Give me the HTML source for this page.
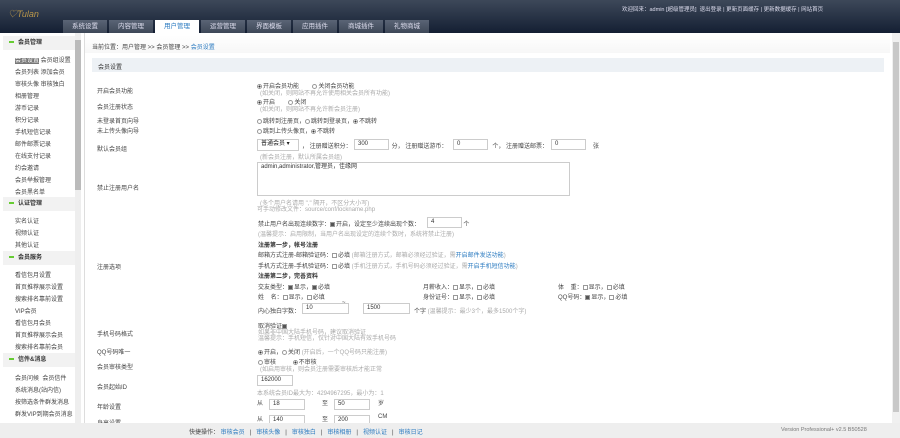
<!DOCTYPE html>
<html><head><meta charset="utf-8"><style>
*{margin:0;padding:0;box-sizing:border-box}
body{width:900px;height:438px;overflow:hidden;position:relative;background:#fff;font-family:"Liberation Sans","Noto Sans CJK SC",sans-serif;font-size:6px;color:#444}
.a{position:absolute;white-space:nowrap}
.h{color:#aaa}
.b{color:#333;font-weight:bold}
.lk{color:#2a7ac0}
#hd{position:absolute;left:0;top:0;width:900px;height:33px;background:linear-gradient(#3d4859,#141f33)}
.tab{position:absolute;top:20px;height:13px;width:44px;background:linear-gradient(#5a6475,#3e4858);color:#dde;text-align:center;line-height:13px;font-size:6.5px}
.tab.on{background:#fff;color:#2a7ac0}
#sb{position:absolute;left:0;top:33px;width:75px;height:390px;background:#fff}
.sh{position:absolute;left:3px;width:72px;height:14px;background:#f2f2f2;line-height:14px;padding-left:6px;font-weight:bold;color:#333}
.sh:before{content:"";display:inline-block;width:5px;height:2px;background:#6c3;margin-right:4px;vertical-align:middle}
.si{position:absolute;left:15px}
.inp{position:absolute;height:11px;border:1px solid #ccc;background:#fff;padding-left:3px;line-height:9px;color:#333}
.r{display:inline-block;width:5px;height:5px;border:1px solid #999;border-radius:50%;vertical-align:middle;margin-right:1px}
.r.c{background:radial-gradient(#333 40%,#fff 45%)}
.c2{display:inline-block;width:5px;height:5px;border:1px solid #999;vertical-align:middle;margin-right:1px}
.c2.c{background:#555}
</style></head><body>
<div id="hd">
<div class="a" style="left:8px;top:7px;color:#b8964a;font-style:italic;font-size:9px">♡Tulan</div>
<div class="a" style="left:622px;top:5px;color:#dde;font-size:5.5px">欢迎回来：admin [超级管理员] &nbsp;退出登录 | 更新页面缓存 | 更新数据缓存 | 网站首页</div>
<div class="tab" style="left:63px">系统设置</div>
<div class="tab" style="left:109px">内容管理</div>
<div class="tab on" style="left:155px">用户管理</div>
<div class="tab" style="left:201px">运营管理</div>
<div class="tab" style="left:247px">界面模板</div>
<div class="tab" style="left:293px">应用插件</div>
<div class="tab" style="left:339px">商城插件</div>
<div class="tab" style="left:385px">礼物商城</div>
</div>
<div id="sb">
<div class="sh" style="top:3px">会员管理</div>
<div class="si" style="top:22px"><span style="background:#777;color:#fff">会员设置</span> 会员组设置</div>
<div class="si" style="top:34px">会员列表 添加会员</div>
<div class="si" style="top:46px">审核头像 审核独白</div>
<div class="si" style="top:58px">相册管理</div>
<div class="si" style="top:70px">游币记录</div>
<div class="si" style="top:82px">积分记录</div>
<div class="si" style="top:94px">手机短信记录</div>
<div class="si" style="top:106px">邮件邮票记录</div>
<div class="si" style="top:118px">在线支付记录</div>
<div class="si" style="top:130px">约会邀请</div>
<div class="si" style="top:142px">会员举报管理</div>
<div class="si" style="top:154px">会员黑名单</div>
<div class="sh" style="top:164px">认证管理</div>
<div class="si" style="top:183px">实名认证</div>
<div class="si" style="top:195px">视频认证</div>
<div class="si" style="top:207px">其他认证</div>
<div class="sh" style="top:218px">会员服务</div>
<div class="si" style="top:237px">看信包月设置</div>
<div class="si" style="top:249px">首页推荐展示设置</div>
<div class="si" style="top:261px">搜索排名靠前设置</div>
<div class="si" style="top:273px">VIP会员</div>
<div class="si" style="top:285px">看信包月会员</div>
<div class="si" style="top:297px">首页推荐展示会员</div>
<div class="si" style="top:309px">搜索排名靠前会员</div>
<div class="sh" style="top:320px">信件&amp;消息</div>
<div class="si" style="top:340px">会员问候 &nbsp;会员信件</div>
<div class="si" style="top:352px">系统消息(站内信)</div>
<div class="si" style="top:364px">按筛选条件群发消息</div>
<div class="si" style="top:376px">群发VIP到期会员消息</div>
</div>
<div class="a" style="left:75px;top:33px;width:6px;height:390px;background:#eee"></div>
<div class="a" style="left:75px;top:40px;width:6px;height:150px;background:#bbb"></div>
<div class="a" style="left:84px;top:33px;width:1px;height:390px;background:#ddd"></div>
<div class="a" style="left:892px;top:33px;width:8px;height:390px;background:#f0f0f0"></div>
<div class="a" style="left:893px;top:42px;width:6px;height:370px;background:#c8c8c8"></div>
<div class="a" style="left:85px;top:35px;width:805px;height:18px;background:linear-gradient(#fff,#f7f7f7)"></div>
<div class="a" style="left:92px;top:42px">当前位置：用户管理 &gt;&gt; 会员管理 &gt;&gt; <span class="lk">会员设置</span></div>
<div class="a" style="left:92px;top:58px;width:792px;height:14px;background:#edf1f5"></div>
<div class="a" style="left:98px;top:62px;color:#333">会员设置</div>

<div class="a" style="left:97px;top:86px">开启会员功能</div>
<div class="a" style="left:257px;top:81px"><span class="r c"></span>开启会员功能 &nbsp;&nbsp;&nbsp;&nbsp;&nbsp;&nbsp;&nbsp;<span class="r"></span>关闭会员功能</div>
<div class="a h" style="left:260px;top:88px">(如关闭，则网站不再允许使用相关会员所有功能)</div>
<div class="a" style="left:97px;top:102px">会员注册状态</div>
<div class="a" style="left:257px;top:97px"><span class="r c"></span>开启 &nbsp;&nbsp;&nbsp;&nbsp;&nbsp;&nbsp;&nbsp;<span class="r"></span>关闭</div>
<div class="a h" style="left:260px;top:104px">(如关闭，则网站不再允许新会员注册)</div>
<div class="a" style="left:97px;top:116px">未登录首页向导</div>
<div class="a" style="left:257px;top:116px"><span class="r"></span>跳转到注册页，<span class="r"></span>跳转到登录页，<span class="r c"></span>不跳转</div>
<div class="a" style="left:97px;top:126px">未上传头像向导</div>
<div class="a" style="left:257px;top:126px"><span class="r"></span>跳到上传头像页，<span class="r c"></span>不跳转</div>
<div class="a" style="left:97px;top:144px">默认会员组</div>
<div class="inp" style="left:257px;top:139px;width:42px;height:12px;color:#222">普通会员 ▾</div>
<div class="a" style="left:302px;top:141px">， 注册赠送积分： &nbsp;&nbsp;&nbsp;&nbsp;&nbsp;&nbsp;&nbsp;&nbsp;&nbsp;&nbsp;&nbsp;&nbsp;&nbsp;&nbsp;&nbsp;&nbsp;&nbsp;&nbsp;&nbsp;&nbsp;&nbsp;&nbsp; 分， 注册赠送游币：&nbsp;&nbsp;&nbsp;&nbsp;&nbsp;&nbsp;&nbsp;&nbsp;&nbsp;&nbsp;&nbsp;&nbsp;&nbsp;&nbsp;&nbsp;&nbsp;&nbsp;&nbsp;&nbsp;&nbsp;&nbsp;&nbsp;&nbsp;&nbsp;&nbsp;&nbsp; 个， 注册赠送邮票：&nbsp;&nbsp;&nbsp;&nbsp;&nbsp;&nbsp;&nbsp;&nbsp;&nbsp;&nbsp;&nbsp;&nbsp;&nbsp;&nbsp;&nbsp;&nbsp;&nbsp;&nbsp;&nbsp;&nbsp;&nbsp;&nbsp;&nbsp;&nbsp;&nbsp;&nbsp; 张</div>
<div class="inp" style="left:354px;top:139px;width:35px">300</div>
<div class="inp" style="left:453px;top:139px;width:35px">0</div>
<div class="inp" style="left:551px;top:139px;width:35px">0</div>
<div class="a h" style="left:260px;top:152px">(新会员注册，默认所属会员组)</div>
<div class="inp" style="left:257px;top:162px;width:313px;height:34px;line-height:8px">admin,administrator,管理员，佳缘网</div>
<div class="a" style="left:97px;top:183px">禁止注册用户名</div>
<div class="a h" style="left:260px;top:198px">(多个用户名请用 "," 隔开，不区分大小写)</div>
<div class="a h" style="left:257px;top:204px">可手动修改文件：source/conf/lockname.php</div>
<div class="a" style="left:258px;top:219px">禁止用户名出现连续数字：<span class="c2 c"></span>开启，设定至少连续出现个数： &nbsp;&nbsp;&nbsp;&nbsp;&nbsp;&nbsp;&nbsp;&nbsp;&nbsp;&nbsp;&nbsp;&nbsp;&nbsp;&nbsp;&nbsp;&nbsp;&nbsp;&nbsp;&nbsp;&nbsp;&nbsp;&nbsp;&nbsp;&nbsp; 个</div>
<div class="inp" style="left:427px;top:217px;width:35px">4</div>
<div class="a h" style="left:258px;top:229px">(温馨提示：启用限制，当用户名出现设定的连续个数时，系统将禁止注册)</div>
<div class="a b" style="left:258px;top:240px">注册第一步，帐号注册</div>
<div class="a" style="left:258px;top:250px">邮箱方式注册-邮箱验证码：<span class="c2"></span>必填 <span class="h">(邮箱注册方式，邮箱必须经过验证，需</span><span class="lk">开启邮件发送功能</span><span class="h">)</span></div>
<div class="a" style="left:258px;top:261px">手机方式注册-手机验证码：<span class="c2"></span>必填 <span class="h">(手机注册方式，手机号码必须经过验证，需</span><span class="lk">开启手机短信功能</span><span class="h">)</span></div>
<div class="a b" style="left:258px;top:271px">注册第二步，完善资料</div>
<div class="a" style="left:97px;top:262px">注册选项</div>
<div class="a" style="left:258px;top:282px">交友类型：<span class="c2 c"></span>显示，<span class="c2 c"></span>必填</div>
<div class="a" style="left:423px;top:282px">月薪收入：<span class="c2"></span>显示，<span class="c2"></span>必填</div>
<div class="a" style="left:558px;top:282px">体 &nbsp;&nbsp;&nbsp;重：<span class="c2"></span>显示，<span class="c2"></span>必填</div>
<div class="a" style="left:258px;top:292px">姓 &nbsp;&nbsp;&nbsp;名：<span class="c2"></span>显示，<span class="c2"></span>必填</div>
<div class="a" style="left:423px;top:292px">身份证号：<span class="c2"></span>显示，<span class="c2"></span>必填</div>
<div class="a" style="left:558px;top:292px">QQ号码：<span class="c2 c"></span>显示，<span class="c2"></span>必填</div>
<div class="a" style="left:258px;top:306px">内心独白字数：</div>
<div class="inp" style="left:302px;top:303px;width:47px">10</div>
<div class="a" style="left:342px;top:300px">~</div>
<div class="inp" style="left:363px;top:303px;width:47px">1500</div>
<div class="a" style="left:414px;top:306px">个字 <span class="h">(温馨提示：最少3个，最多1500个字)</span></div>
<div class="a" style="left:258px;top:321px">取消验证<span class="c2 c"></span></div>
<div class="a h" style="left:258px;top:327px">如果非中国大陆手机号码，建议取消验证</div>
<div class="a h" style="left:258px;top:333px">温馨提示：手机短信，仅针对中国大陆有效手机号码</div>
<div class="a" style="left:97px;top:329px">手机号码格式</div>
<div class="a" style="left:97px;top:347px">QQ号码唯一</div>
<div class="a" style="left:258px;top:347px"><span class="r c"></span>开启，<span class="r"></span>关闭 <span class="h">(开启后，一个QQ号码只能注册)</span></div>
<div class="a" style="left:97px;top:362px">会员审核类型</div>
<div class="a" style="left:258px;top:357px"><span class="r"></span>审核 &nbsp;&nbsp;&nbsp;&nbsp;&nbsp;&nbsp;&nbsp;&nbsp;&nbsp;<span class="r c"></span>不审核</div>
<div class="a h" style="left:260px;top:364px">(如启用审核，则会员注册需要审核后才能正常</div>
<div class="a" style="left:97px;top:382px">会员起始ID</div>
<div class="inp" style="left:257px;top:375px;width:36px">162000</div>
<div class="a h" style="left:257px;top:388px">本系统会员ID最大为：4294967295，最小为：1</div>
<div class="a" style="left:97px;top:402px">年龄设置</div>
<div class="a" style="left:257px;top:398px">从</div>
<div class="inp" style="left:269px;top:399px;width:36px">18</div>
<div class="a" style="left:322px;top:398px">至</div>
<div class="inp" style="left:334px;top:399px;width:36px">50</div>
<div class="a" style="left:378px;top:398px">岁</div>
<div class="a" style="left:97px;top:418px">身高设置</div>
<div class="a" style="left:257px;top:414px">从</div>
<div class="inp" style="left:269px;top:415px;width:36px">140</div>
<div class="a" style="left:322px;top:414px">至</div>
<div class="inp" style="left:334px;top:415px;width:36px">200</div>
<div class="a" style="left:378px;top:414px">CM</div>

<div class="a" style="left:0;top:423px;width:900px;height:15px;background:#eeeeee"></div>
<div class="a" style="left:189px;top:427px">快捷操作： <span class="lk">审核会员</span> &nbsp;&nbsp;| &nbsp;&nbsp;<span class="lk">审核头像</span> &nbsp;&nbsp;| &nbsp;&nbsp;<span class="lk">审核独白</span> &nbsp;&nbsp;| &nbsp;&nbsp;<span class="lk">审核相册</span> &nbsp;&nbsp;| &nbsp;&nbsp;<span class="lk">视频认证</span> &nbsp;&nbsp;| &nbsp;&nbsp;<span class="lk">审核日记</span></div>
<div class="a" style="left:781px;top:427px;font-size:5.5px;color:#777">Version Professional+ v2.5 B50528</div>
</body></html>
